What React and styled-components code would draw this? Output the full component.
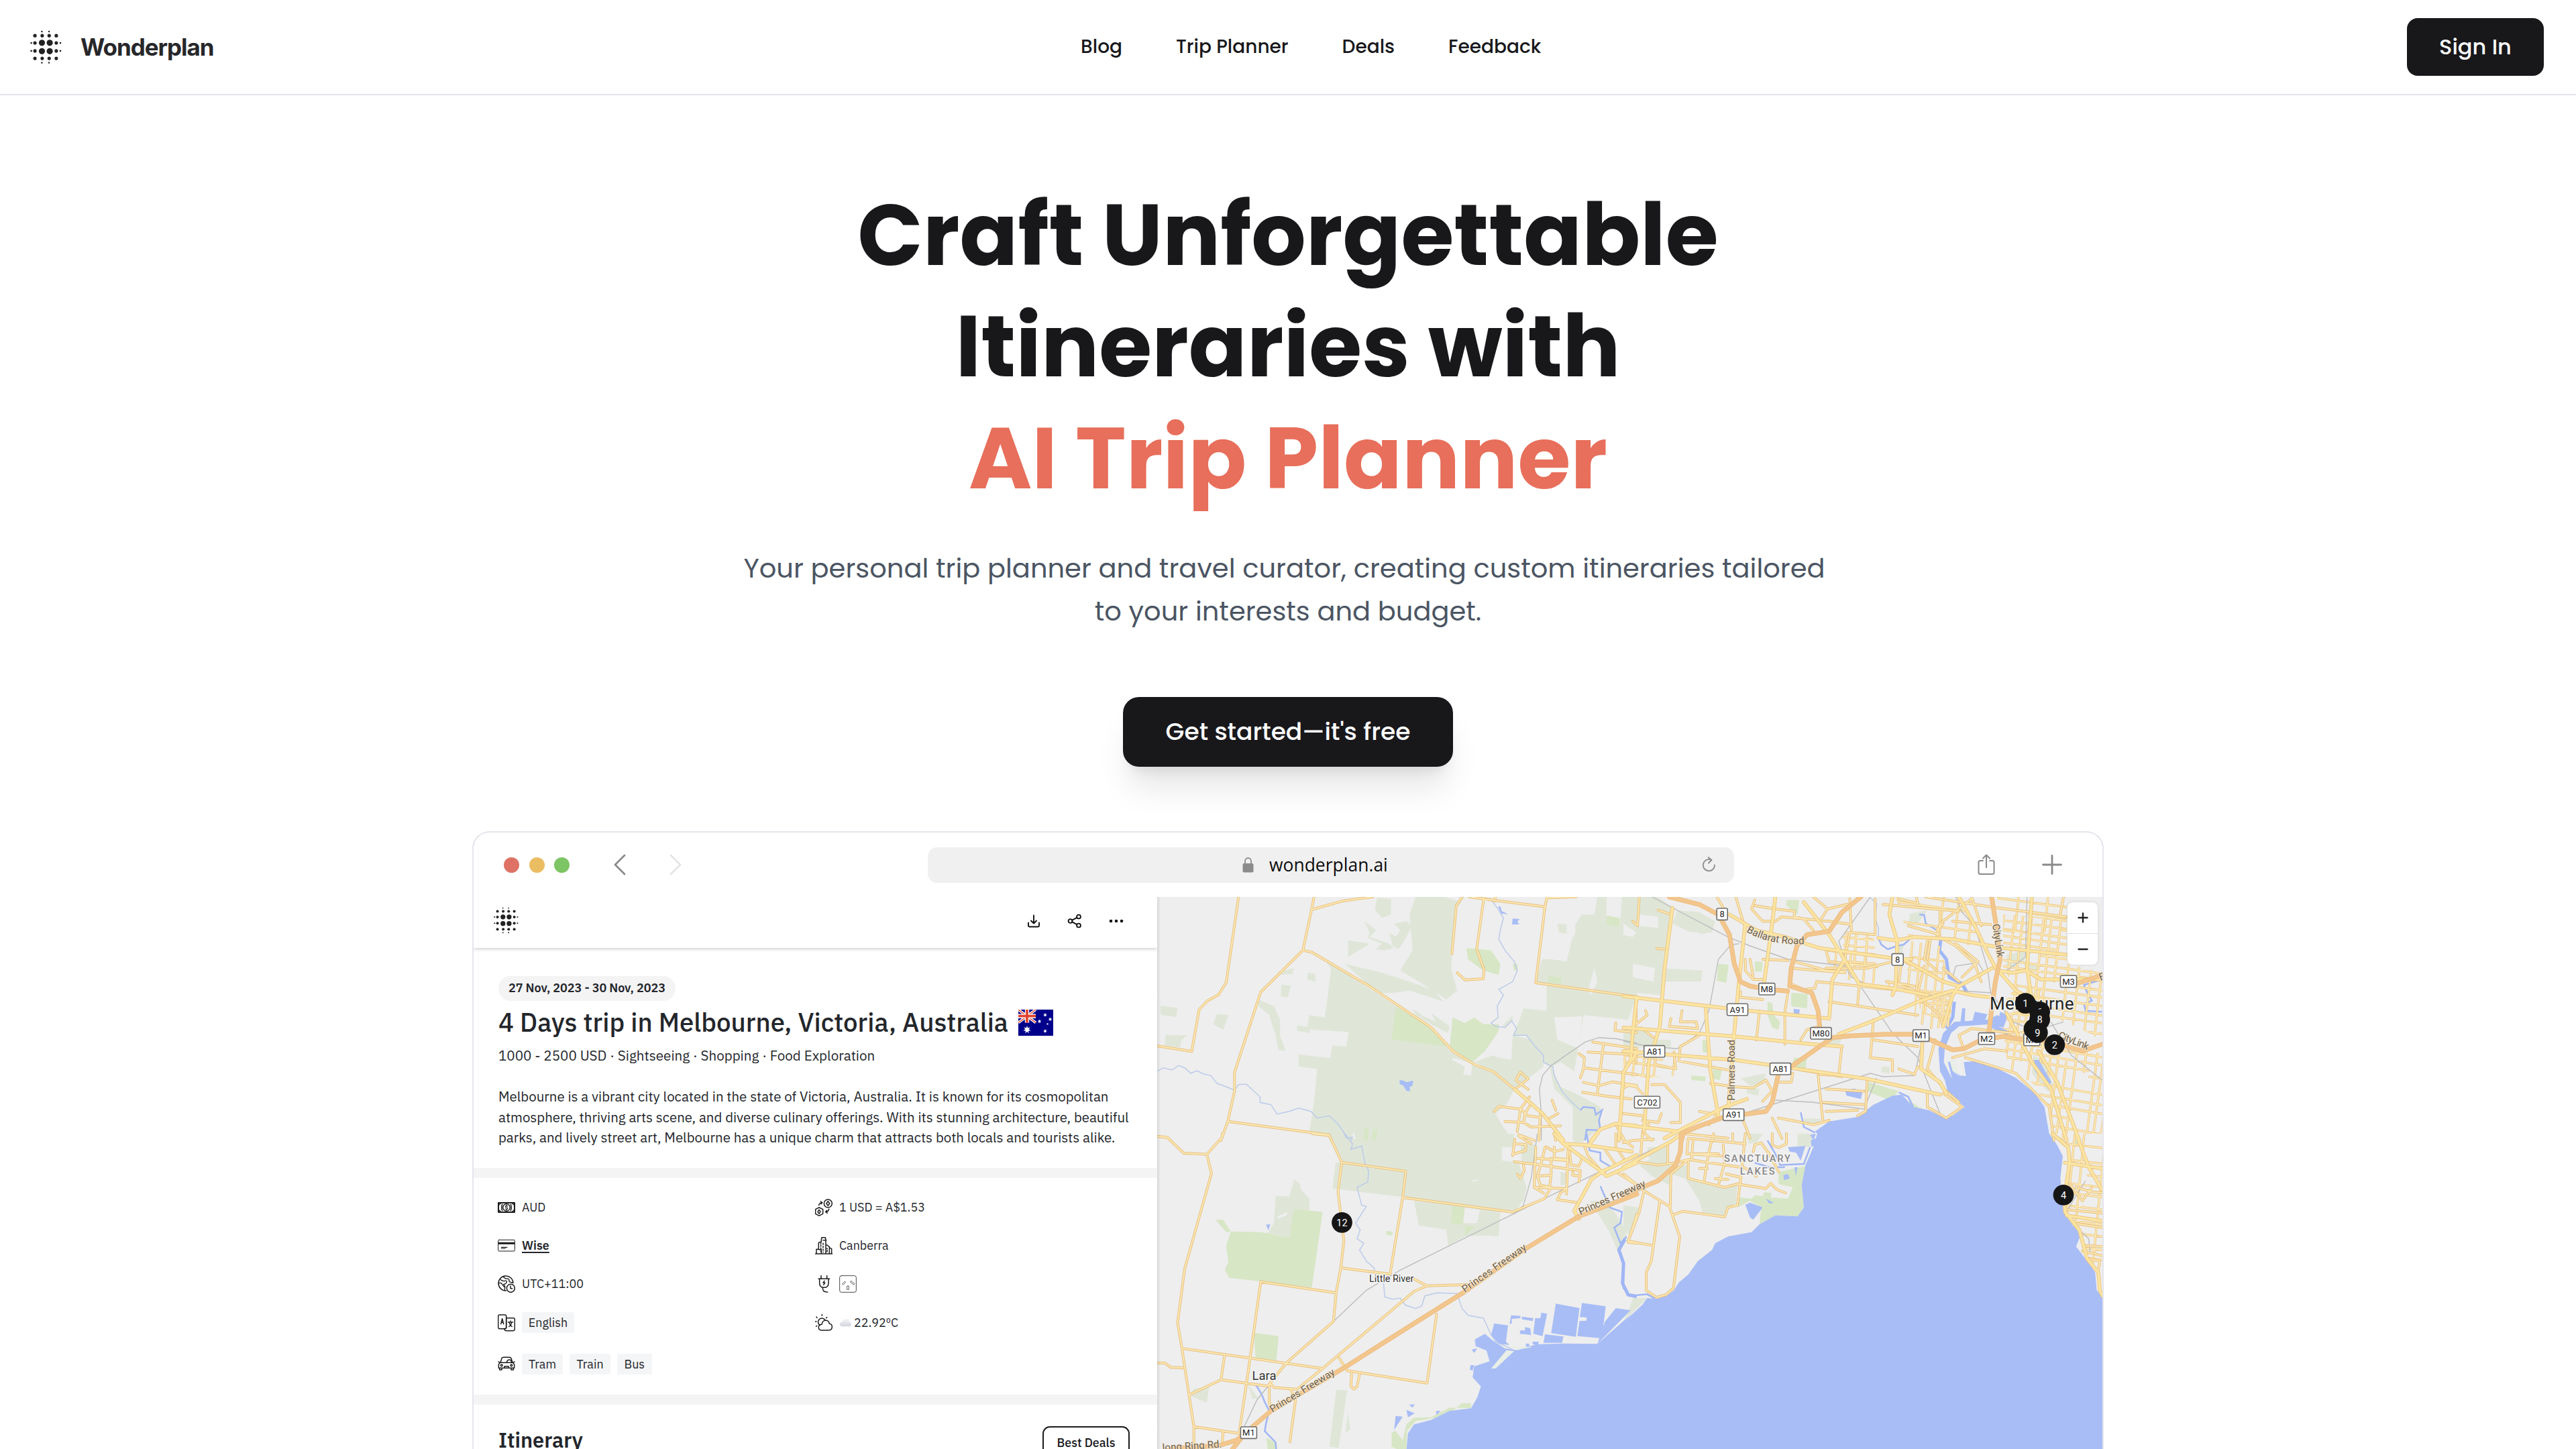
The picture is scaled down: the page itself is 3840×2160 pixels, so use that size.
import React from "react";
import styled, { createGlobalStyle } from "styled-components";

/* ---------- base ---------- */

const Global = createGlobalStyle`
  *, *::before, *::after { box-sizing: border-box; }
  html, body { margin: 0; padding: 0; background: #fff; }
  body { overflow: hidden; }
`;

const geo = `"Poppins", "Inter", "Liberation Sans", sans-serif`;
const plex = `"IBM Plex Sans", "Noto Sans", "Liberation Sans", sans-serif`;

const Page = styled.div`
  width: 3840px;
  height: 2160px;
  overflow: hidden;
  display: flex;
  flex-direction: column;
  background: #fff;
  color: #18181b;
  font-family: ${geo};
`;

/* ---------- header ---------- */

const Header = styled.header`
  flex: none;
  height: 142px;
  border-bottom: 2px solid #e5e5ec;
  padding: 0 48px 0 45px;
  display: flex;
  align-items: center;
  justify-content: space-between;
`;

const Brand = styled.a`
  display: flex;
  align-items: center;
  gap: 28px;
`;

const BrandName = styled.span`
  font: 700 35px/44px "Inter", sans-serif;
  letter-spacing: -1.05px;
  color: #27272a;
`;

const Nav = styled.nav`
  display: flex;
  align-items: center;
  gap: 80px;
  padding-left: 2px;
`;

const NavLink = styled.a`
  font-size: 28px;
  line-height: 40px;
  font-weight: 500;
`;

const SignIn = styled.button`
  width: 204px;
  height: 86px;
  border: 0;
  border-radius: 16px;
  background: #18181b;
  color: #fff;
  font: 500 32px/48px ${geo};
  padding: 0;
`;

/* ---------- hero ---------- */

const Hero = styled.main`
  flex: none;
  height: 1097px;
  padding-top: 126px;
  display: flex;
  flex-direction: column;
  align-items: center;
`;

const Title = styled.h1`
  margin: 0;
  font-size: 128px;
  line-height: 166.4px;
  font-weight: 700;
  text-align: center;
`;

const TitleLine = styled.span`
  display: block;
  color: ${(p) => (p.$accent ? "#e76f5b" : "inherit")};
`;

const Lead = styled.p`
  margin: 48px 0 0;
  font-size: 40px;
  line-height: 64px;
  font-weight: 400;
  text-align: center;
  white-space: nowrap;
  color: #4b5563;
`;

const LeadLine = styled.span`
  display: block;
  margin-right: ${(p) => p.$nudge || 0}px;
`;

const Cta = styled.button`
  margin-top: 96px;
  width: 492px;
  height: 104px;
  border: 0;
  border-radius: 24px;
  background: #18181b;
  color: #fff;
  font: 500 36px/56px ${geo};
  padding: 0;
  box-shadow: 0 40px 50px -10px rgba(0, 0, 0, 0.1), 0 16px 20px -12px rgba(0, 0, 0, 0.1);
`;

/* ---------- browser window ---------- */

const Browser = styled.section`
  flex: none;
  align-self: center;
  width: 2432px;
  height: 960px;
  border: 2px solid #e5e5ec;
  border-radius: 26px 26px 0 0;
  overflow: hidden;
  display: flex;
  flex-direction: column;
  background: #fff;
`;

const Chrome = styled.div`
  flex: none;
  height: 96px;
  display: grid;
  grid-template-columns: 677px 1202px 1fr;
  align-items: center;
`;

const ChromeLeft = styled.div`
  display: flex;
  align-items: center;
  padding-left: 45px;
`;

const Lights = styled.div`
  display: flex;
  gap: 14.5px;
  margin-right: 65px;
`;

const Light = styled.i`
  width: 23px;
  height: 23px;
  border-radius: 50%;
  background: ${(p) => p.$color};
`;

const Arrows = styled.div`
  display: flex;
  gap: 65px;
`;

const UrlBar = styled.div`
  height: 53px;
  border-radius: 14px;
  background: #f0f0f0;
  padding: 0 27px 0 469px;
  display: flex;
  align-items: center;
`;

const Url = styled.span`
  flex: 1;
  margin-left: 23px;
  font: 400 26.4px/40px "Open Sans", "Noto Sans", sans-serif;
  letter-spacing: 0.05px;
  color: #0c0c0c;
`;

const ChromeRight = styled.div`
  display: flex;
  align-items: center;
  justify-content: flex-end;
  gap: 70px;
  padding-right: 60px;
`;

const Split = styled.div`
  flex: 1;
  min-height: 0;
  display: grid;
  grid-template-columns: 1019px 1fr;
`;

/* ---------- trip panel ---------- */

const Panel = styled.div`
  display: flex;
  flex-direction: column;
  min-height: 0;
  font-family: ${plex};
  color: #23262b;
`;

const PanelHeader = styled.div`
  flex: none;
  height: 76px;
  padding: 0 50px 5px 30px;
  display: flex;
  align-items: center;
  justify-content: space-between;
  box-shadow: 0 2px 5px rgba(0, 0, 0, 0.18);
  clip-path: inset(0 0 -14px 0);
`;

const PanelActions = styled.div`
  display: flex;
  align-items: center;
  gap: 40px;
`;

const Intro = styled.div`
  flex: none;
  height: 328px;
  padding: 42px 0 0 37px;
  display: flex;
  flex-direction: column;
  align-items: flex-start;
`;

const DatePill = styled.span`
  height: 37px;
  padding: 0 15px;
  border-radius: 18px;
  background: #f4f4f5;
  font-size: 18px;
  line-height: 36px;
  font-weight: 600;
  letter-spacing: -0.08px;
`;

const TripTitle = styled.div`
  margin-top: 8px;
  display: flex;
  align-items: center;
  gap: 15px;
  height: 48px;
`;

const TripName = styled.h2`
  margin: 0;
  font-size: 38.38px;
  line-height: 48px;
  font-weight: 500;
`;

const TripTags = styled.p`
  margin: 11px 0 0;
  font-size: 20.6px;
  line-height: 30px;
`;

const Description = styled.p`
  margin: 31px 0 0;
  font-size: 20.46px;
  line-height: 30.6px;
  white-space: pre;
`;

const Band = styled.div`
  flex: none;
  height: 15px;
  background: #f4f4f4;
`;

const Facts = styled.div`
  flex: none;
  height: 323px;
  padding: 15px 0 0 36px;
  display: grid;
  grid-template-columns: 473px 1fr;
  grid-template-rows: 57px 57px 57px 59px 64px;
`;

const Fact = styled.div`
  display: flex;
  align-items: center;
  gap: 10px;
  font-size: 17.9px;
`;

const FactText = styled.span`
  line-height: 28px;
`;

const FactLink = styled.a`
  font-weight: 600;
  text-decoration: underline;
  text-underline-offset: 3px;
  text-decoration-thickness: 1.5px;
`;

const Chip = styled.span`
  width: ${(p) => p.$w}px;
  height: 31px;
  border-radius: 3px;
  background: #f4f5f6;
  line-height: 31px;
  text-align: center;
`;

const Weather = styled.span`
  display: flex;
  align-items: center;
  gap: 3px;
`;

const ItineraryBar = styled.div`
  flex: none;
  padding: 32px 41px 0 37px;
  display: flex;
  align-items: flex-start;
  justify-content: space-between;
`;

const SectionTitle = styled.h3`
  margin: 0;
  font-size: 30.8px;
  line-height: 40px;
  font-weight: 600;
`;

const DealsButton = styled.button`
  width: 130px;
  height: 50px;
  border: 2px solid #1c1c1e;
  border-radius: 11px;
  background: #fff;
  color: #18181b;
  font: 500 17.9px/24px ${plex};
  padding: 0;
`;

/* ---------- map ---------- */

const MapPane = styled.div`
  position: relative;
  overflow: hidden;
  background: #eeeeee;
`;

const MapSvg = styled.svg`
  display: block;
  font-family: "Roboto", sans-serif;
`;

const ZoomControl = styled.div`
  position: absolute;
  top: 8px;
  right: 7px;
  width: 45px;
  height: 93px;
  border-radius: 8px;
  background: #fff;
  box-shadow: 0 0 4px rgba(0, 0, 0, 0.12);
  display: flex;
  flex-direction: column;
`;

const ZoomButton = styled.div`
  flex: 1;
  display: flex;
  align-items: center;
  justify-content: center;
  border-top: ${(p) => (p.$second ? "1px solid #dddddd" : "0")};
`;

/* ---------- icons ---------- */

const logoDots = [
  [16.5, 2, 1.2], [27, 2, 1.2],
  [6.4, 8, 2.5], [17, 8, 2.5], [27.2, 8, 2.5], [37.6, 8, 2.5],
  [1, 18.7, 1.3], [6.4, 18.7, 2.5], [16.6, 18.5, 4.5], [28, 18.5, 4.5], [37.6, 18.7, 2.5], [43.6, 18.7, 1.3],
  [1, 30.3, 1.3], [6.4, 30.3, 2.5], [16.6, 30.7, 4.5], [28, 30.7, 4.5], [37.6, 30.3, 2.5], [43.6, 30.3, 1.3],
  [6.4, 41.3, 2.5], [17, 41.3, 2.5], [27.2, 41.3, 2.5], [37.6, 41.3, 2.5],
  [16.5, 47.6, 1.2], [27, 47.6, 1.2],
];

function Logo({ size }) {
  return (
    <svg width={size} height={size * 1.085} viewBox="-0.5 0 46 50" fill="#222224">
      {logoDots.map(([x, y, r], i) => (
        <circle key={i} cx={x} cy={y} r={r} />
      ))}
    </svg>
  );
}

function Line({ w, h, box, sw, color = "#1b1b1d", children }) {
  return (
    <svg width={w} height={h} viewBox={box} fill="none" stroke={color} strokeWidth={sw} strokeLinecap="round" strokeLinejoin="round">
      {children}
    </svg>
  );
}

const FactIcon = ({ children, sw = 4.5 }) => (
  <Line w={26} h={26} box="0 0 78 78" sw={sw}>{children}</Line>
);

const icons = {
  cash: (
    <FactIcon>
      <rect x="3" y="18" width="72" height="42" strokeWidth="6" />
      <circle cx="39" cy="39" r="16" />
      <path d="M44 33q-5-4-9 0q-2 5 4 6q6 1 4 6q-4 4-9 0M39 28v4M39 46v4" strokeWidth="3.5" />
      <path d="M20 25q-6 14 0 28M58 25q6 14 0 28M5 28l8-8M73 28l-8-8M5 50l8 8M73 50l-8 8" />
    </FactIcon>
  ),
  card: (
    <FactIcon sw={3}>
      <rect x="2" y="13" width="74" height="50" rx="4" />
      <path d="M3 28h72" strokeWidth="9" strokeLinecap="butt" />
      <path d="M16 46h26M16 51h18" strokeWidth="3.5" />
    </FactIcon>
  ),
  globe: (
    <FactIcon>
      <path d="M37 69A33 33 0 1 1 69 34" />
      <path d="M10 18q12 10 22 7q10-2 8 6q-2 7-14 10q8 6 6 14q-2 6 0 13M3 36q12-6 18 6q4 8 11 12M25 5q2 8 12 10q14 0 14 6q-2 8 6 10l9 2" strokeWidth="4" />
      <circle cx="58" cy="58" r="18" />
      <path d="M57 48v11h8" />
    </FactIcon>
  ),
  translate: (
    <FactIcon>
      <rect x="2" y="3" width="36" height="62" rx="6" />
      <path d="M38 17h31q7 0 7 6v44q0 7-7 7H38q-8 0-8-8" />
      <path d="M14 44l6-24 6 24M16 37h8" />
      <path d="M46 36h22M57 30v6M50 56q10-6 12-18M64 56q-10-6-12-18" strokeWidth="3.8" />
      <path d="M30 66l8-4V17" />
    </FactIcon>
  ),
  car: (
    <FactIcon>
      <path d="M12 34L18 14q2-4 8-4h26q6 0 8 4l6 20M3 30l8 4M75 30l-8 4M10 34h58l6 8v16H4V42zM8 58v8h10v-8M60 58v8h10v-8M30 58v-8h18v8" />
      <path d="M40 33q2-12 12-12t9 11" />
      <circle cx="17" cy="46" r="4" />
      <circle cx="61" cy="46" r="4" />
    </FactIcon>
  ),
  exchange: (
    <FactIcon>
      <circle cx="58" cy="21" r="18" />
      <path d="M58 11l7 10-7 10-7-10z" />
      <path d="M18 39l17 8v20l-17 9-16-9V47z" />
      <path d="M18 49l6 9-6 9-6-9z" />
      <path d="M17 29q1-10 14-12M25 12l7 5-5 6M62 46q-1 10-14 13M55 64l-8-5 5-7" />
    </FactIcon>
  ),
  city: (
    <FactIcon>
      <path d="M1 75h76M16 55V27q0-4 12-6v-9l2-10h16l2 10v60M16 55H6v20M48 36h6l10 8v30M64 48l10 4v22M26 21v10M36 14h14M16 56h12v18" />
      <path d="M26 36v30M36 28v40M54 50v4M54 60v6" strokeDasharray="6 7" />
    </FactIcon>
  ),
  plug: (
    <FactIcon>
      <path d="M27 2v14M53 2v14M15 16h50M20 17v18q0 20 20 20t20-20V17M34 54q0 20 14 20q6 0 8 2" />
      <path d="M42 25l-6 9h8l-6 9" strokeWidth="4.5" />
    </FactIcon>
  ),
  socket: (
    <FactIcon sw={2.4}>
      <rect x="2" y="2" width="74" height="74" rx="8" />
      <path d="M14 38l11-11 4 4-11 11zM64 42L49 30l4-5 15 12zM36 48h7v16h-7z" stroke="#3a3a3c" />
    </FactIcon>
  ),
  sun: (
    <FactIcon>
      <path d="M22 50a17 17 0 1 1 24-22M31 2v5M6 12l3 4M53 14l-3 3M1 33h5M8 52l-3 3" />
      <path d="M28 72q-12-1-12-13t14-13q3-18 17-18q15 0 17 15q12 1 12 14q0 14-14 15z" />
    </FactIcon>
  ),
};

function Cloud() {
  return (
    <svg width="19" height="13" viewBox="0 0 54 38">
      <defs>
        <linearGradient id="cloud" x1="0" y1="0" x2="0" y2="1">
          <stop offset="0" stopColor="#f5f5f8" />
          <stop offset="1" stopColor="#d3d5dd" />
        </linearGradient>
      </defs>
      <path d="M12 36Q2 35 2 26t11-10Q17 2 29 3t15 13q8 2 8 11t-10 9z" fill="url(#cloud)" />
    </svg>
  );
}

function Flag() {
  const star = (cx, cy, r, key) => {
    const pts = [];
    for (let i = 0; i < 14; i++) {
      const a = (i * Math.PI) / 7 - Math.PI / 2;
      const q = i % 2 ? r * 0.45 : r;
      pts.push(`${(cx + q * Math.cos(a)).toFixed(1)},${(cy + q * Math.sin(a)).toFixed(1)}`);
    }
    return <polygon key={key} points={pts.join(" ")} fill="#fff" />;
  };
  return (
    <svg width="52" height="39" viewBox="0 0 52 39">
      <rect width="52" height="39" fill="#00008b" />
      <path d="M0 0L26 19.5M26 0L0 19.5" stroke="#fff" strokeWidth="4" />
      <path d="M0 0L26 19.5M26 0L0 19.5" stroke="#e2452f" strokeWidth="1.4" />
      <path d="M13 0V19.5M0 9.7H26" stroke="#fff" strokeWidth="6.4" />
      <path d="M13 0V19.5M0 9.7H26" stroke="#e2452f" strokeWidth="3.8" />
      {star(13, 30, 6, "c")}
      {[[40, 8, 3], [31.5, 17.5, 3], [47.5, 14.5, 3], [40, 32, 3], [43.5, 21.5, 1.8]].map(([x, y, r], i) => star(x, y, r, i))}
    </svg>
  );
}

/* ---------- map geometry ---------- */

// The map is surveyed in four sheets; each converts its own grid to map units.
const sheet = (ox, oy, kx, ky) => (s) =>
  s.trim().split(/\s+/).map((p) => {
    const [x, y] = p.split(",").map(Number);
    return [ox + x / kx, oy + y / ky];
  });

const NW = sheet(1720, 1230, 2.178, 3);
const NE = sheet(2420, 1230, 2.119, 3);
const SW = sheet(1720, 1690, 2.178, 3);
const SE = sheet(2420, 1690, 2.119, 3);

const d = (pts) => "M" + pts.map(([x, y]) => `${x.toFixed(1)} ${y.toFixed(1)}`).join("L");
const open = (f, list) => list.map((s) => d(f(s))).join("");
const areas = (f, list) => list.map((s) => d(f(s)) + "Z");

const forest = [
  ...areas(NW, [
    "553,600 575,640 570,700 565,760 555,860 505,850 498,900 515,915 632,925 625,990 580,985 572,1042 470,1025 470,1080 530,1090 520,1240 505,1370 570,1385 578,1411 1165,1411 1130,1340 1110,1290 1150,1240 1170,1180 1100,1100 1030,1065 965,1015 900,905 785,808",
    "850,321 940,321 1000,345 980,370 965,640 985,740 950,780 860,700 800,650 840,560 830,400",
    "620,620 740,660 830,700 910,740 940,790 900,770 830,740 780,750 740,750 700,720",
    "1260,600 1290,600 1340,610 1370,440 1390,400 1430,400 1440,321 1568,321 1568,765 1240,705",
    "1275,710 1568,768 1540,870 1395,850 1365,1100 1320,1060 1290,1080 1320,1170 1370,1200 1450,1260 1450,1350 1400,1411 1360,1411 1360,1260 1300,1180 1285,1080 1260,1060 1210,940 1165,945 1190,860 1200,820 1275,830",
    "1165,940 1230,960 1265,1030 1265,1080 1200,1150 1170,1180 1100,1100 1040,1060 1100,1030 1160,1050",
    "22,808 78,818 72,858 22,848", "205,845 243,850 225,915 192,890", "38,938 110,940 90,960 85,995 35,985",
    "415,715 445,718 435,770 412,765", "500,660 525,665 525,700 498,690", "400,660 455,640 450,665 405,670",
    "465,895 510,905 505,930 465,920", "630,515 700,530 690,540 630,590",
    "340,780 390,810 410,870 410,940 428,1010 405,1005 395,940 375,850 340,810", "725,325 770,330 770,400 740,415 718,380",
    "683,430 722,470 700,500 765,530 790,570 780,550 750,560 720,555 740,530 695,505 700,480",
    "780,440 800,470 785,500 765,480 775,540 795,555 820,500 838,450 820,430", "840,820 850,850 900,890 955,930 960,900 900,840 915,880 870,850",
    "1310,440 1340,445 1340,485 1315,480", "1130,900 1165,850 1165,870 1145,905",
  ]),
  ...areas(SW, [
    "560,0 1170,0 1165,60 1130,60 1130,120 1185,130 1210,240 1200,300 1170,350 820,285 580,245 590,130 610,128",
    "845,300 1165,350 1125,350 1120,460 1080,455 1010,460 955,500 950,430 860,410",
    "395,280 440,280 455,205 475,225 478,250 505,290 505,345 455,340 440,465 370,445 390,400",
    "592,1145 628,1148 600,1405 570,1400", "130,1140 180,1130 172,1203 115,1170",
    "1415,300 1470,300 1520,400 1535,460 1510,540 1480,440", "630,1245 638,1320 622,1340", "305,1120 340,1185 320,1185",
    "1190,40 1240,50 1230,130 1195,125", "1360,0 1400,0 1395,40 1365,40", "1320,170 1340,175 1335,230 1320,230",
  ]),
  ...areas(NE, [
    "0,321 110,321 155,370 140,600 120,760 0,745", "155,440 225,490 280,480 290,430 240,390 170,380",
    "120,640 250,650 245,700 125,700", "0,900 60,900 95,960 150,960 150,1000 0,990", "380,1130 450,1110 440,1160 400,1165 370,1130",
    "905,395 960,380 930,440 900,450", "1210,580 1270,560 1265,610 1210,650", "860,540 885,530 880,590 860,590",
    "815,1080 840,1080 840,1110 815,1105", "555,1380 600,1385 590,1410 550,1410", "1265,620 1315,630 1310,650 1275,660",
    "1295,1030 1325,1050 1358,1160 1340,1190 1290,1110", "640,950 690,955 680,985 650,980", "390,1170 430,1180 425,1210 390,1200", "570,1310 625,1315 610,1340 570,1335",
  ]),
  ...areas(SE, [
    "130,80 150,150 200,140 205,200 320,240 360,225 355,320 325,330 320,365 250,360 200,270 90,190 50,140", "0,320 50,330 20,450 0,440", "550,0 600,0 590,60 550,55", "30,735 75,735 25,805 0,840 20,780",
    "75,60 140,60 135,130 80,110", "390,0 440,0 420,40 395,45",
  ]),
];

const clearings = [
  ...areas(NW, [
    "1470,321 1520,321 1515,420 1470,405", "640,1400 650,1370 655,1405", "970,1040 1035,1065 1030,1120 1005,1115 1010,1080 968,1050",
    "1075,1010 1120,920 1130,900 1165,930 1160,1048 1120,1040", "1345,460 1370,465 1365,500 1345,495", "1300,860 1390,855 1380,1000 1310,960", "1430,640 1440,700 1420,760 1410,740", "1500,340 1518,345 1515,400 1495,395",
  ]),
  ...areas(NE, ["150,470 240,480 240,600 150,570", "50,400 110,410 110,460 40,450", "0,440 40,480 30,500 0,490", "165,700 240,710 230,780 165,760", "30,620 100,640 95,700 30,680"]),
  ...areas(SW, ["1030,210 1050,205 1050,212 1030,214", "400,370 435,350 430,365 405,380", "1005,330 1058,340 1050,400 1005,400"]),
  ...areas(SE, ["60,80 75,100 60,120 50,100", "150,180 195,200 240,300 250,355 180,340 155,330"]),
];

const parks = [
  ...areas(NW, [
    "785,812 900,905 950,990 772,960", "970,860 1010,885 1040,860 1070,890 1120,890 1120,920 1075,1010 1035,1060 960,1000",
    "1015,550 1095,560 1125,620 1120,670 1070,650 1020,600", "1470,405 1513,415 1510,455 1470,445", "1282,675 1323,680 1320,710 1280,705",
    "683,1355 698,1357 695,1411 680,1411", "712,1360 725,1362 722,1411 708,1411", "1165,620 1180,620 1182,650 1170,650",
  ]),
  ...areas(SW, [
    "455,335 548,350 513,688 345,660 245,645 230,610 242,575 235,500 250,437 350,440 440,465",
    "325,890 405,905 398,1013 330,1003", "755,435 776,438 774,455 755,452", "968,322 1010,328 1003,408 965,402", "1010,410 1040,415 1010,460",
    "200,385 225,385 250,437 235,440", "820,1410 822,1330 850,1285 920,1270 975,1235 1000,1205 1030,1205 1030,1228 960,1225 900,1268 845,1270 820,1300 808,1370 785,1330 772,1335 772,1400 790,1411",
    "365,1360 400,1385 400,1411 370,1411",
  ]),
  ...areas(NE, [
    "300,620 332,625 325,705 295,695", "415,610 440,612 438,655 415,655", "530,750 582,755 580,820 530,810", "540,1040 580,1040 575,1095 530,1080",
    "515,335 555,335 550,400 515,360", "455,790 470,795 475,850 495,880 490,915 470,905 455,850", "775,1150 870,1190 840,1230 770,1190",
    "250,960 272,965 268,1020 250,1015", "283,1090 310,1095 305,1140 283,1135", "215,1120 260,1125 258,1145 215,1140", "900,1230 950,1275 940,1260 915,1280",
  ]),
  ...areas(SE, [
    "490,170 575,145 563,230 570,330 550,370 480,365 430,405 435,330 400,300 360,330 365,285 405,290 415,275 440,280 445,262 468,265 465,285 520,290 535,240 490,225", "1420,30 1438,30 1436,50 1420,50",
  ]),
];

const bay = [
  ...NE("605,1370 650,1325 740,1305 790,1250 850,1210 880,1205 915,1260 965,1275 1015,1310 1040,1300 1078,1260 1060,1240 1025,1195 1015,1140 1000,1100 995,1000 1010,930 1045,880 1150,870 1180,850 1210,870 1200,905 1160,890 1060,900 1035,930 1015,1000 1012,1060 1038,1135 1025,1060 1045,1050 1050,1090 1062,1120 1082,1122 1075,1060 1115,1055 1170,1080 1240,1130 1300,1200 1330,1260 1340,1340 1345,1380"),
  ...SE("1355,20 1370,50 1388,100 1380,200 1390,350 1420,410 1445,450 1430,505 1460,560 1490,620 1495,700 1513,730"),
  [3136, 1934], [3136, 2162],
  ...SW("820,1416 825,1340 845,1300 900,1280 960,1240 1030,1228 1050,1180 1062,1130 1035,1090 1040,1040 1090,1018 1080,970 1045,950 1042,920 1075,895 1100,925 1140,960 1180,968 1240,942 1330,938 1440,940 1568,785"),
  ...SE("0,840 30,805 60,765 75,735 105,738 135,725 160,700 175,665 205,630 235,570 280,520 290,490 330,460 405,440 430,405 480,365 550,370 570,330 563,230 575,140 600,60 612,0"),
];

const water = [
  d(bay) + "Z",
  ...areas(SW, [
    "1305,760 1382,780 1370,908 1290,892", "1390,757 1467,772 1455,915 1375,905 1382,838 1405,836 1405,822 1383,820", "1270,897 1330,907 1325,935 1265,935",
    "1500,780 1548,790 1440,940 1465,840", "1258,800 1277,805 1262,905 1232,895 1238,825 1255,825",
    "1105,848 1150,857 1143,930 1155,945 1120,940 1095,900", "1160,812 1190,815 1190,825 1162,828 1162,850 1155,850", "1195,818 1232,825 1230,838 1195,830",
    "1205,865 1222,870 1225,900 1188,895 1190,880 1205,880", "785,1262 808,1265 780,1325", "820,1235 847,1250 825,1268", "828,1212 847,1210 840,1225", "916,1240 932,1240 918,1258",
    "364,406 378,406 372,432", "1032,965 1050,960 1040,980", "1230,930 1250,930 1248,942 1230,942", "1208,938 1220,940 1218,955 1208,955", "1028,1035 1040,1035 1035,1060 1026,1055",
  ]),
  ...areas(NW, ["1118,365 1125,362 1130,385 1150,398 1128,396", "1165,418 1188,420 1180,432 1187,443 1163,445", "798,1140 810,1142 820,1150 842,1142 840,1165 830,1172 833,1190 820,1188 810,1165 798,1158"]),
  ...areas(NE, ["538,822 557,825 555,848 538,845", "700,1185 730,1178 755,1195 750,1225 705,1210", "1070,818 1080,820 1078,885 1064,890", "1110,835 1150,845 1140,880 1100,890", "1190,835 1215,850 1205,880 1185,870", "1165,885 1220,925 1215,940 1160,905", "1297,1050 1312,1050 1352,1150 1345,1160 1300,1100", "590,1385 608,1380 600,1410"]),
  ...areas(SE, ["385,318 400,308 440,330 410,385 400,375", "520,60 575,55 560,120 545,85 525,80", "450,290 475,310 460,312", "505,185 520,180 525,200 508,208", "540,150 550,150 545,190", "592,30 608,20 606,50 594,60"]),
];

const spits = [...areas(SW, ["1145,968 1170,972 1110,1050 1095,1050", "1230,955 1180,965 1150,950 1190,950"]), ...areas(NE, ["1030,1050 1045,1050 1060,1120 1040,1100"])];

const streams =
  open(NW, [
    "12,1100 30,1085 60,1095 80,1075 100,1085 120,1110 140,1098 160,1112 185,1120 205,1155 225,1165 262,1185 275,1160 300,1158 325,1190 345,1215 345,1240 380,1250 400,1292 440,1280 470,1265 510,1280 530,1310 570,1300 600,1340 615,1370 625,1400 645,1395 640,1410",
    "1090,325 1115,370 1135,415 1125,470 1120,510 1140,560 1170,610 1180,650 1165,700 1120,735 1135,760 1115,810 1118,860 1095,885 1110,900 1140,905 1162,875 1178,910 1168,940 1210,940 1235,985 1265,1030 1265,1060 1295,1080 1300,1120 1325,1190 1350,1230 1385,1275",
  ]) +
  open(SW, [
    "620,0 645,45 640,70 675,55 685,130 697,165 695,215 660,240 675,320 690,325 655,400 670,430 660,470 682,490 668,520 690,570 715,600 717,612",
    "745,660 750,730 775,740 800,735 815,765 850,782 870,770 880,725 920,712 985,715 1000,780 1020,812 1070,825 1095,900 1110,930 1165,965",
  ]) +
  open(NE, ["780,325 800,350 795,420 806,460 805,510"]);

const rivers =
  open(NW, ["1385,1275 1395,1260 1430,1265 1435,1295 1455,1275 1445,1320 1450,1365 1405,1362 1400,1410"]) +
  open(SW, ["1405,0 1415,75 1450,85 1450,120 1480,145 1460,180", "330,1120 350,1165 360,1200 375,1240 365,1290 360,1330 395,1380 397,1410", "1450,235 1480,330 1520,350 1515,400 1495,420 1515,490 1535,460"]) +
  open(NE, ["805,505 815,535 835,555 865,540 885,535 903,512", "935,400 950,402 955,440 990,470 1003,475", "560,1285 570,1350 605,1375", "1512,690 1455,715 1465,750 1480,785 1455,800 1460,830 1512,835", "870,1195 900,1215 915,1260"]) +
  open(SE, ["455,30 480,90 495,140 570,135 590,60", "415,130 460,150 510,150", "0,580 0,690 20,725 75,718 100,738"]);

const wideRivers =
  open(NE, ["1003,510 998,560 1020,600 1025,650 1030,680 1070,710 1082,740 1075,755", "1045,790 1040,860 1020,910"]) +
  open(SW, ["1530,470 1510,520 1525,580 1522,670 1540,720 1568,728"]);

const rails =
  open(NW, ["1568,975 1500,955 1445,950 1400,970 1290,1075 1262,1120 1252,1180 1258,1290 1258,1410"]) +
  open(SW, ["1568,90 1350,235 1180,350 800,610 690,700 583,840 430,1030 335,1190 290,1320", "1245,0 1225,200 1200,320 1170,360"]) +
  open(NE, [
    "90,321 330,500 400,540 520,600 700,630 720,680 780,720 960,760 1000,765 1060,740 1160,750 1230,880 1300,920 1390,880",
    "0,965 80,990 170,1000 240,930 270,830 300,600 340,535 365,530", "780,321 680,520 710,640 850,930 930,1040 1000,1290",
    "380,1290 780,1110 820,1125 920,1120 945,950", "480,1230 600,1240 760,1270 800,1130", "1050,321 1070,390 1110,450 1150,640 1160,750", "1275,321 1270,590 1210,650",
    "1350,880 1415,1030 1512,1140", "1040,680 1050,630 1120,615 1140,660",
  ]) +
  open(SE, ["1460,210 1420,300 1400,350", "1425,410 1470,470 1475,540", "0,130 180,15"]);

const minor =
  open(NW, [
    "275,321 235,705 210,758 175,785 147,825 123,1012 12,988",
    "520,321 512,378 484,560 347,747 262,1105 262,1190 240,1325 218,1410",
    "512,378 610,340 710,321", "484,560 512,568 700,720 900,905 972,1012 1040,1070 1103,1103 1172,1182",
    "240,1325 568,1385 578,1410", "12,1392 40,1395 50,1405", "1002,321 982,360 968,575",
    "1072,321 1048,555 1072,645 1070,687 1010,692 985,660", "1025,321 1100,335 1270,365 1277,321", "1277,325 1370,321",
    "1270,365 1240,705 1568,768", "1110,321 1105,340", "1500,885 1497,918 1568,928", "1425,970 1568,1000", "1410,1015 1548,1025",
    "1460,980 1440,1200", "1380,1022 1398,1040 1395,1090 1385,1130", "1395,1085 1568,1115", "1395,1150 1445,1165 1490,1148 1568,1165",
    "1392,1195 1470,1212 1550,1225", "1190,1105 1215,1135 1172,1182", "1190,1105 1175,1140 1215,1182",
    "1105,1280 1120,1258 1190,1270 1215,1300 1255,1308", "1220,1215 1190,1270 1180,1370", "1140,1325 1200,1330 1225,1350 1320,1345",
    "1293,1230 1305,1275", "1225,1245 1205,1290 1200,1330", "1312,1290 1280,1315", "1185,1385 1235,1410", "1255,1290 1250,1410",
    "1300,1380 1305,1410", "1500,1340 1525,1400", "1545,1160 1520,1180 1515,1225", "1555,430 1568,445",
  ]) +
  open(SW, [
    "12,12 45,18 97,87 172,92 222,15 222,0", "172,92 187,178 100,605 77,845 91,960 130,1310 130,1380",
    "515,0 570,8 610,128 598,260 605,340 617,480 607,600 592,710 583,840 430,1025 375,1120", "610,128 818,168 808,285 767,628 607,600",
    "808,285 1165,350 1268,290", "347,662 592,712", "347,662 313,1000 277,1340", "91,960 548,1050", "12,1025 35,1025 55,1045 100,1048",
    "230,990 218,1100 115,1168", "218,1100 365,1128 380,1120 390,1135 465,1143 548,1050 845,705 887,680 1020,675", "887,680 845,650", "600,1000 628,1060 887,1115 918,808",
    "642,1070 640,1130 650,1142 660,1130 668,1075", "375,1128 375,1200 380,1235", "445,1145 460,1190 442,1378", "130,1310 277,1340", "225,1335 222,1390",
    "1185,10 1225,45", "1172,25 1165,98", "1172,45 1208,48 1208,75 1168,90", "1170,125 1230,135 1385,165 1380,215", "1200,140 1203,165 1190,200 1180,180",
    "1240,60 1235,240 1265,265", "1270,60 1260,120 1245,190 1255,230 1290,240 1268,290", "1290,110 1290,180 1285,240", "1345,60 1340,270",
    "1350,80 1355,140 1380,145 1390,110", "1300,60 1300,110 1340,115", "1245,110 1340,120", "1245,190 1290,185", "1385,190 1360,185 1360,170", "1275,60 1300,80 1330,70",
    "1240,240 1340,245 1320,265 1310,295 1375,308", "1398,55 1410,100 1455,170", "1460,60 1495,130", "1500,170 1568,230",
    "1500,0 1500,60 1525,110", "1568,360 1540,485 1568,490", "1520,20 1555,60",
  ]) +
  open(NE, [
    "50,321 45,450 30,430", "110,380 150,400", "105,552 140,555", "295,321 320,380", "355,321 380,440", "415,335 405,375 440,430 480,430",
    "415,360 480,375 540,385 540,410 570,420 600,470", "480,430 500,410 650,430 720,445", "645,375 620,430", "600,321 645,375 720,350",
    "715,330 720,470", "700,600 715,480 795,490 795,330", "820,355 1060,385", "870,330 930,350 925,321", "955,321 1180,370 1400,410", "900,450 1000,490",
    "1010,440 990,470", "1100,330 1000,440 990,500", "1040,430 1160,445", "385,600 385,650 410,690 445,690", "400,600 410,680", "530,640 700,660",
    "530,710 570,735 605,730 610,700 850,735", "640,560 650,610 710,620", "540,610 640,650 700,655", "745,710 740,800", "650,790 930,850",
    "370,745 370,770 440,780", "520,745 510,835", "430,830 420,960", "510,840 510,980", "560,960 580,915 620,900", "690,990 680,1120 620,1115",
    "790,870 780,1040 850,1050 850,1100", "790,960 930,990", "560,1095 690,1125", "615,1120 630,1320", "770,1135 765,1280 740,1300", "630,1240 760,1250",
    "640,1280 740,1275", "450,1140 410,1175 350,1170 275,1155", "450,1140 470,1190 440,1235", "490,1310 530,1320 600,1340 650,1320", "490,1150 530,1150 535,1110",
    "470,1310 500,1400", "370,1290 400,1400", "30,940 40,880 40,770", "70,830 75,850 40,890", "185,830 180,880 230,880 235,910", "150,865 145,900 235,910",
    "60,910 95,950", "985,960 960,1090 1020,1190 1060,1240", "1010,1200 1070,1260 1020,1310 960,1260 960,1190",
    "900,620 880,600 870,700", "960,520 950,600 990,650", "970,510 960,600", "1010,640 1060,700", "1130,700 1110,620 1050,540 1010,510", "1050,530 1120,610 1070,680",
    "1040,1040 1140,1000 1210,1010", "1060,940 1100,910 1230,930", "1075,1000 1060,940", "940,780 1000,850 1010,900", "850,610 770,640 640,640",
    "40,1010 40,1060", "160,1015 165,1090 100,1070 100,1000", "90,1160 130,1160 180,1240 180,1330 150,1330", "0,1160 40,1170 60,1200", "120,1290 110,1330 60,1320", "0,1290 60,1300 80,1340",
    "60,1370 90,1410", "240,940 180,990 175,1055 350,1100", "300,1290 270,1340", "870,1090 920,1115", "195,1380 330,1400", "240,1280 300,1295", "830,700 920,720", "520,605 440,600", "640,1180 760,1190",
    "1360,1410 1345,1260 1240,1110 1080,1040", "930,1080 920,1110", "1390,321 1380,400", "1100,321 1130,450", "1000,385 1000,430", "840,700 920,740 940,770", "950,630 930,750",
  ]) +
  open(SE, [
    "65,255 50,350 15,480 92,500", "60,0 55,90", "0,40 30,30 95,25", "40,125 110,140 165,130 205,115 250,125 370,150", "205,20 200,90 310,100", "205,20 385,45", "285,0 270,80 255,210",
    "205,115 205,200 320,240 360,225 450,245 465,222 485,250 512,265", "385,0 375,150 360,320 330,330 320,372 188,347 158,362", "315,50 320,130 300,230", "240,155 265,155",
    "325,180 370,195", "345,0 345,38", "470,0 470,50 490,62 515,45 515,0", "410,80 415,50 435,40 460,90 490,170", "150,180 148,330", "205,115 150,180", "290,200 330,205", "140,40 140,130",
    "0,180 65,255 145,325 178,460 158,690 135,720 105,732 72,700 72,620 88,570 115,300", "220,30 215,115", "225,90 300,90", "0,75 25,78", "380,150 420,190",
    "1430,240 1480,260 1512,265", "1410,225 1450,300 1480,240", "1400,340 1512,355", "1420,400 1512,420", "1455,500 1512,505", "1450,525 1512,545", "1470,560 1505,570 1500,610",
  ]);

const major =
  open(NW, ["1172,1182 1262,1290 1330,1410", "1568,768 1555,930 1548,1055 1525,1105 1510,1410", "1420,1410 1450,1360 1500,1335 1568,1345", "1568,1010 1555,1050"]) +
  open(SW, ["1300,0 1330,45 1455,170 1420,205 1365,345 1380,380", "1330,45 1400,50 1552,80", "1440,0 1410,55", "1568,130 1470,190 1455,170 1568,95"]) +
  open(NE, [
    "480,321 470,440 445,700", "385,440 365,700 350,930 330,1290", "155,370 130,640 115,900 80,1060 65,1370", "0,765 330,820 430,835 650,865",
    "0,905 350,945 600,980 690,990", "0,1010 350,1050 500,1080 770,1135 1000,1205", "650,865 660,690 700,600", "570,345 650,490 715,640 745,710 850,730 960,760",
    "335,400 420,470 510,500 620,550 850,595 910,600", "680,935 790,875 930,790 1040,740 1100,760 1160,770", "805,505 860,515 920,500 1040,510 1200,550 1400,580",
    "1060,321 1110,450 1150,570 1180,650", "850,321 840,400 865,520 860,720 850,760", "1290,321 1275,640 1290,780", "1180,650 1230,660 1270,650 1320,690 1512,690",
    "1190,660 1240,740 1290,780", "885,600 1010,700 1060,720", "1040,760 1010,900", "945,950 940,1090 1000,1150 1020,1200", "1210,840 1290,1060 1350,1180 1400,1410", "1310,1010 1370,1150 1440,1410",
    "260,821 275,1100 300,1300", "130,1400 320,1260 390,1225", "0,1340 175,1370", "1165,640 1060,720 1040,760",
  ]) +
  open(SE, ["0,150 150,35 185,0", "1430,0 1470,150 1512,250", "1355,0 1405,60 1410,130 1395,260 1395,350 1440,430 1465,560 1500,620 1505,700 1513,725", "1395,130 1512,155", "1400,365 1512,390"]);

const highways =
  open(SW, ["1568,270 1380,370 1200,520 1000,715 820,870 620,1045 380,1240 270,1370 210,1395 90,1405 12,1425", "290,1350 255,1411"]) +
  open(SE, ["183,0 180,80 165,140 110,210 0,275"]) +
  open(NE, [
    "145,321 240,355 300,400 335,490 350,620 370,700 400,720 460,735 518,742", "750,321 690,390 650,475 580,490 548,540 530,640 525,720 595,750 615,830 620,900",
    "183,1411 190,1375 250,1340 320,1305 450,1280 470,1240 490,1110 540,1070 600,1010 660,950 720,942 830,935 930,935 985,970 1040,1005 1075,1000 1130,960 1200,945 1290,965 1370,960 1400,990 1450,1010 1512,980",
    "1163,321 1180,470 1190,600 1175,700 1165,800 1155,920 1150,960", "1513,670 1440,705 1400,700",
  ]);

// Suburban street meshes: two families of slightly broken parallel lines inside an outline.
function mesh(outline, stepA, stepB, tilt, seed) {
  const xs = outline.map((p) => p[0]);
  const ys = outline.map((p) => p[1]);
  const x0 = Math.min(...xs), x1 = Math.max(...xs), y0 = Math.min(...ys), y1 = Math.max(...ys);
  let s = seed;
  const rnd = () => ((s = (s * 16807) % 2147483647) / 2147483647);
  let out = "";
  for (let y = y0 - 80; y < y1 + 80; y += stepB * (0.7 + rnd() * 0.6)) {
    for (let x = x0; x < x1; ) {
      const len = 40 + rnd() * 110;
      const e = Math.min(x + len, x1);
      if (rnd() > 0.22) out += `M${x.toFixed(1)} ${(y + (x - x0) * tilt).toFixed(1)}L${e.toFixed(1)} ${(y + (e - x0) * tilt).toFixed(1)}`;
      x = e;
    }
  }
  for (let x = x0 - 60; x < x1 + 60; x += stepA * (0.7 + rnd() * 0.6)) {
    for (let y = y0; y < y1; ) {
      const len = 35 + rnd() * 90;
      const e = Math.min(y + len, y1);
      if (rnd() > 0.22) out += `M${(x - (y - y0) * tilt * 0.8).toFixed(1)} ${y.toFixed(1)}L${(x - (e - y0) * tilt * 0.8).toFixed(1)} ${e.toFixed(1)}`;
      y = e;
    }
  }
  return out;
}

const meshes = [
  [NE("1195,860 1250,820 1380,1000 1512,1020 1512,1380 1355,1380 1340,1260 1290,1150 1215,1090"), 14, 12, 0.17, 11],
  [SE("1355,0 1512,0 1512,600 1495,600 1460,540 1400,350 1405,80"), 17, 20, 0.12, 23],
  [NE("1200,400 1400,420 1400,620 1512,660 1512,960 1400,880 1340,860 1280,820 1200,640"), 15, 13, 0.14, 37],
  [NE("1180,321 1400,321 1400,480 1200,480"), 22, 15, 0.13, 53],
  [NE("690,470 790,490 800,640 700,640"), 13, 11, 0.08, 71],
  [NE("910,520 1000,540 1030,700 1040,900 920,920 920,760 860,700 900,640"), 15, 15, 0.12, 97],
  [NE("925,740 1050,740 1020,880 940,840"), 11, 9, 0.12, 101],
  [NE("0,1000 90,1010 160,1040 160,1120 80,1130 0,1120"), 16, 14, 0.14, 131],
  [NE("860,321 1050,321 1150,560 1000,500 900,500"), 30, 24, 0.14, 151],
  [NE("640,560 780,590 850,720 650,680"), 20, 20, 0.1, 173],
];

const cbd = [NE("1240,720 1330,740 1340,850 1270,860 1200,800"), 9, 8, 0.2, 7];

const shields = [
  ["8", 2567.2, 1362.7, 17], ["A91", 2590, 1505, 32], ["M8", 2633.8, 1474.3, 25], ["8", 2828.7, 1430.3, 18],
  ["M80", 2714.5, 1540.3, 32], ["M1", 2863.6, 1543.7, 25], ["M2", 2961.4, 1548.3, 25], ["M3", 3083.5, 1463, 25], ["M1", 3028.8, 1550, 25],
  ["A81", 2466.2, 1567.3, 32], ["A81", 2654, 1593.3, 32], ["C702", 2455.4, 1643, 39], ["A91", 2584.2, 1661.7, 32], ["M1", 1861.4, 2135.7, 25],
];

const places = [
  ["Melbourne", 2966, 1505, 125.5, 26, "#222", 400], ["SANCTUARY", 2570, 1732, 99, 14.6, "#858585", 500], ["LAKES", 2593.7, 1750.7, 52, 14.6, "#858585", 500],
  ["Little River", 2041, 1911, 66.5, 14.5, "#333", 400], ["Lara", 1866.5, 2057, 36, 18.5, "#333", 400],
];

const roadNames = [
  ["Princes Freeway", 2183.7, 1927.3, -35.2, 113.6], ["Princes Freeway", 1896.8, 2106, -31.5, 110.4], ["Princes Freeway", 2355.9, 1811.7, -23.9, 107.3],
  ["Palmers Road", 2586, 1640.7, -90, 90.7], ["CityLink", 2970, 1378, 81.5, 50], ["CityLink", 3067, 1547, 22, 48], ["long Ring Rd.", 1733, 2163, -3.5, 89],
  ["E", 3131, 1462, -20, 8],
];

const markers = [["7", 3032, 1534], ["6", 3040.6, 1508.3], ["8", 3040.6, 1520], ["9", 3037.3, 1539.3], ["1", 3019.3, 1495.7], ["2", 3062.8, 1557.3], ["12", 2000.5, 1822.3], ["4", 3076, 1781.3]];

function Areas({ shapes, fill }) {
  return (
    <g fill={fill}>
      {shapes.map((s, i) => (
        <path key={i} d={s} />
      ))}
    </g>
  );
}

function Roads({ path, casing, fill, w, edge = 2, clip }) {
  return (
    <g clipPath={clip} fill="none" strokeLinejoin="round" strokeLinecap="round">
      <path d={path} stroke={casing} strokeWidth={w + edge} />
      <path d={path} stroke={fill} strokeWidth={w} />
    </g>
  );
}

function TripMap() {
  return (
    <MapSvg width="1409" height="823" viewBox="1725 1337 1409 823">
      <defs>
        {[...meshes, cbd].map(([outline], i) => (
          <clipPath id={`mesh${i}`} key={i}>
            <path d={d(outline) + "Z"} />
          </clipPath>
        ))}
        <path id="ballarat" d="M2603 1389Q2640 1410 2692 1407" />
        <linearGradient id="edge" x1="0" x2="1" y1="0" y2="0">
          <stop offset="0" stopColor="#000" stopOpacity="0.1" />
          <stop offset="1" stopColor="#000" stopOpacity="0" />
        </linearGradient>
      </defs>
      <Areas shapes={forest} fill="#dfe6d8" />
      <Areas shapes={clearings} fill="#eeeeee" />
      <Areas shapes={parks} fill="#d7e6c5" />
      <path d={streams} fill="none" stroke="#bccbe9" strokeWidth="1.5" />
      <path d={rivers} fill="none" stroke="#a0b6f5" strokeWidth="2.5" />
      <path d={wideRivers} fill="none" stroke="#a0b6f5" strokeWidth="5" />
      {meshes.map((m, i) => (
        <Roads key={i} path={mesh(...m)} casing="#edc785" fill="#fbe9b4" w={1.8} edge={1.6} clip={`url(#mesh${i})`} />
      ))}
      <Roads path={mesh(...cbd)} casing="#f0cf8c" fill="#fbe6a8" w={2} clip={`url(#mesh${meshes.length})`} />
      <Areas shapes={water} fill="#a8bdf6" />
      <Areas shapes={spits} fill="#e9eee6" />
      <path d={rails} fill="none" stroke="#bdbdbf" strokeWidth="1.4" />
      <Roads path={minor} casing="#e8bf7b" fill="#fbe8b4" w={2} edge={1.9} />
      <Roads path={major} casing="#ecc684" fill="#fbe5a2" w={3.6} />
      <Roads path={highways} casing="#edbd80" fill="#f2c68d" w={5} />
      <rect x="1725" y="1337" width="5" height="823" fill="url(#edge)" />

      {roadNames.map(([t, x, y, a, len], i) => (
        <text key={i} transform={`translate(${x} ${y}) rotate(${a})`} textLength={len} fontSize="15" fill="#6d5d4a" stroke="#f4ead8" strokeWidth="1.6" paintOrder="stroke">{t}</text>
      ))}
      <text fontSize="15" fill="#6d5d4a" stroke="#f4ead8" strokeWidth="1.6" paintOrder="stroke">
        <textPath href="#ballarat" textLength="90">Ballarat Road</textPath>
      </text>
      {places.map(([t, x, y, len, fs, color, weight], i) => (
        <text key={i} x={x} y={y} textLength={len} fontSize={fs} fontWeight={weight} fill={color} stroke="#f5f5f5" strokeWidth="3" strokeLinejoin="round" paintOrder="stroke">{t}</text>
      ))}
      {shields.map(([t, x, y, w], i) => (
        <g key={i}>
          <rect x={x - w / 2 + 0.5} y={y - 8.7} width={w - 1} height="17.4" rx="2" fill="#fff" stroke="#6e6e6e" strokeWidth="1.6" />
          <text x={x} y={y + 4.7} textAnchor="middle" fontSize="13" fill="#222">{t}</text>
        </g>
      ))}
      {markers.map(([t, x, y], i) => (
        <g key={i}>
          <circle cx={x} cy={y} r="15.4" fill="#161617" />
          <text x={x} y={y + 5.2} textAnchor="middle" fontSize="14.5" fill="#fff">{t}</text>
        </g>
      ))}
    </MapSvg>
  );
}

/* ---------- page ---------- */

const links = ["Blog", "Trip Planner", "Deals", "Feedback"];

export default function App() {
  return (
    <Page>
      <Global />
      <Header>
        <Brand>
          <Logo size={47} />
          <BrandName>Wonderplan</BrandName>
        </Brand>
        <Nav>
          {links.map((t) => (
            <NavLink key={t}>{t}</NavLink>
          ))}
        </Nav>
        <SignIn>Sign In</SignIn>
      </Header>

      <Hero>
        <Title>
          <TitleLine>Craft Unforgettable</TitleLine>
          <TitleLine>Itineraries with</TitleLine>
          <TitleLine $accent>AI Trip Planner</TitleLine>
        </Title>
        <Lead>
          <LeadLine $nudge={11}>Your personal trip planner and travel curator, creating custom itineraries tailored</LeadLine>
          <LeadLine>to your interests and budget.</LeadLine>
        </Lead>
        <Cta>Get started—it's free</Cta>
      </Hero>

      <Browser>
        <Chrome>
          <ChromeLeft>
            <Lights>
              <Light $color="#de7264" />
              <Light $color="#ebbd63" />
              <Light $color="#7dc464" />
            </Lights>
            <Arrows>
              <Line w={19} h={32} box="0 0 19 32" sw={2.8} color="#8a8a8a"><path d="M17 2L3 16l14 14" /></Line>
              <Line w={19} h={32} box="0 0 19 32" sw={2.8} color="#e4e4e4"><path d="M2 2l14 14L2 30" /></Line>
            </Arrows>
          </ChromeLeft>
          <UrlBar>
            <svg width="17" height="24" viewBox="0 0 17 24">
              <path d="M4 11V6.5a4.5 4.5 0 0 1 9 0V11" fill="none" stroke="#8c8c8c" strokeWidth="1.8" />
              <rect x="0.5" y="10" width="16" height="13.5" rx="2" fill="#8c8c8c" />
            </svg>
            <Url>wonderplan.ai</Url>
            <Line w={21} h={24} box="0 0 21 24" sw={1.8} color="#8c8c8c"><path d="M13 4.5A8.6 8.6 0 1 0 19 12.5M9.500 1l5 4-4.500 4.500" /></Line>
          </UrlBar>
          <ChromeRight>
            <Line w={26} h={32} box="0 0 26 32" sw={2} color="#8a8a8a"><path d="M8 10H4q-2.500 0-2.500 2.500v15Q1.500 30 4 30h18q2.500 0 2.500-2.500v-15Q24.500 10 22 10h-4M13 20V2M8 6.500L13 1.500l5 5" /></Line>
            <Line w={30} h={30} box="0 0 30 30" sw={2.8} color="#8a8a8a"><path d="M15 1.500v27M1.500 15h27" /></Line>
          </ChromeRight>
        </Chrome>

        <Split>
          <Panel>
            <PanelHeader>
              <Logo size={37} />
              <PanelActions>
                <Line w={20} h={20} box="0 0 20 20" sw={1.9} color="#111"><path d="M10 1.500v11.500M6 9.500l4 4 4-4M2 12.500v4q0 2 2 2h12q2 0 2-2v-4" /></Line>
                <Line w={22} h={22} box="0 0 22 22" sw={1.9} color="#111">
                  <circle cx="4.500" cy="11" r="2.900" /><circle cx="17" cy="4.500" r="2.900" /><circle cx="17" cy="17.500" r="2.900" />
                  <path d="M7.300 9.600l7-3.700M7.300 12.400l7 3.700" />
                </Line>
                <svg width="22" height="22" viewBox="0 0 22 22" fill="#111">
                  <circle cx="3" cy="11" r="2.300" /><circle cx="11" cy="11" r="2.300" /><circle cx="19" cy="11" r="2.300" />
                </svg>
              </PanelActions>
            </PanelHeader>

            <Intro>
              <DatePill>27 Nov, 2023 - 30 Nov, 2023</DatePill>
              <TripTitle>
                <TripName>4 Days trip in Melbourne, Victoria, Australia</TripName>
                <Flag />
              </TripTitle>
              <TripTags>1000 - 2500 USD · Sightseeing · Shopping · Food Exploration</TripTags>
              <Description>
                {"Melbourne is a vibrant city located in the state of Victoria, Australia. It is known for its cosmopolitan\natmosphere, thriving arts scene, and diverse culinary offerings. With its stunning architecture, beautiful\nparks, and lively street art, Melbourne has a unique charm that attracts both locals and tourists alike."}
              </Description>
            </Intro>

            <Band />

            <Facts>
              <Fact>{icons.cash}<FactText>AUD</FactText></Fact>
              <Fact>{icons.exchange}<FactText>1 USD = A$1.53</FactText></Fact>
              <Fact>{icons.card}<FactLink>Wise</FactLink></Fact>
              <Fact>{icons.city}<FactText>Canberra</FactText></Fact>
              <Fact>{icons.globe}<FactText>UTC+11:00</FactText></Fact>
              <Fact>{icons.plug}{icons.socket}</Fact>
              <Fact>{icons.translate}<Chip $w={78}>English</Chip></Fact>
              <Fact>
                {icons.sun}
                <Weather><Cloud /><FactText>22.92ºC</FactText></Weather>
              </Fact>
              <Fact>
                {icons.car}
                <Chip $w={61}>Tram</Chip>
                <Chip $w={61}>Train</Chip>
                <Chip $w={51.5}>Bus</Chip>
              </Fact>
            </Facts>

            <Band />

            <ItineraryBar>
              <SectionTitle>Itinerary</SectionTitle>
              <DealsButton>Best Deals</DealsButton>
            </ItineraryBar>
          </Panel>

          <MapPane>
            <TripMap />
            <ZoomControl>
              <ZoomButton>
                <Line w={16} h={16} box="0 0 16 16" sw={2.4} color="#222"><path d="M8 1.500v13M1.500 8h13" /></Line>
              </ZoomButton>
              <ZoomButton $second>
                <Line w={16} h={16} box="0 0 16 16" sw={2.4} color="#222"><path d="M1.500 8h13" /></Line>
              </ZoomButton>
            </ZoomControl>
          </MapPane>
        </Split>
      </Browser>
    </Page>
  );
}
